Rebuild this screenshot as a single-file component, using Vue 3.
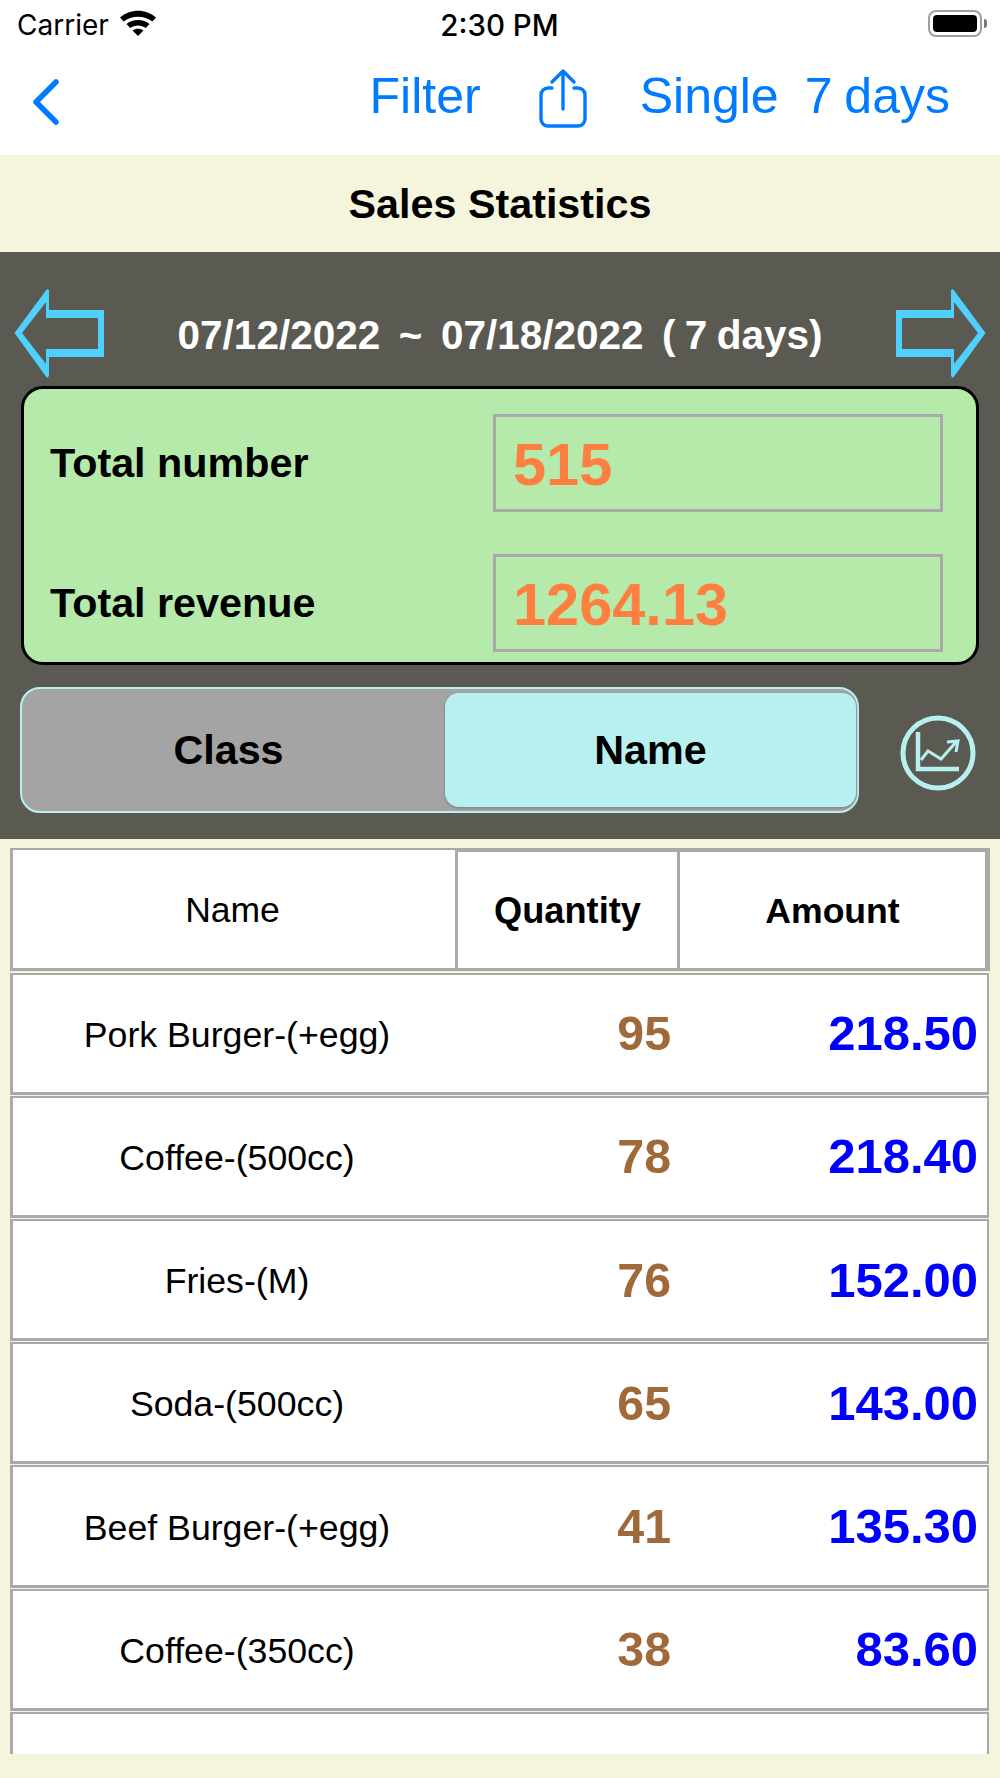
<script setup>
const dateText = '07/12/2022  ~  07/18/2022  ( 7 days)'

const rows = [
  { name: 'Pork Burger-(+egg)', qty: 95, amount: '218.50' },
  { name: 'Coffee-(500cc)', qty: 78, amount: '218.40' },
  { name: 'Fries-(M)', qty: 76, amount: '152.00' },
  { name: 'Soda-(500cc)', qty: 65, amount: '143.00' },
  { name: 'Beef Burger-(+egg)', qty: 41, amount: '135.30' },
  { name: 'Coffee-(350cc)', qty: 38, amount: '83.60' },
  { name: '', qty: '', amount: '' }
]
</script>

<template>
  <div class="page">
    <div class="status-bar">
      <div class="carrier">
        <span>Carrier</span>
        <svg class="wifi" width="38" height="28" viewBox="0 0 38 28">
          <path d="M1 9.5C11 .5 27 .5 37 9.5l-3.6 4C25.500 7 12.500 7 4.600 13.500z" fill="#000" />
          <path d="M7.500 16C13.500 10.500 24.500 10.500 30.500 16l-3.700 4C22.500 16.500 15.500 16.500 11.200 20z" fill="#000" />
          <path d="M13.500 22.500C16.500 20 21.500 20 24.500 22.500L19 28z" fill="#000" />
        </svg>
      </div>
      <div class="clock">2:30 PM</div>
      <div class="battery-wrap">
        <div class="battery"><div class="battery-fill"></div></div>
        <div class="battery-cap"></div>
      </div>
    </div>

    <div class="nav-bar">
      <svg class="back" width="30" height="48" viewBox="0 0 30 48">
        <path d="M26 4L6 24l20 20" fill="none" stroke="#007aff" stroke-width="5.500" stroke-linecap="round" stroke-linejoin="round" />
      </svg>
      <span class="nav-link filter">Filter</span>
      <svg class="share" width="50" height="62" viewBox="0 0 50 62">
        <path d="M14 20H10a7 7 0 0 0-7 7v24a7 7 0 0 0 7 7h30a7 7 0 0 0 7-7V27a7 7 0 0 0-7-7h-4" fill="none" stroke="#007aff" stroke-width="3.400" stroke-linecap="round" />
        <path d="M25 41V3M14 14L25 3l11 11" fill="none" stroke="#007aff" stroke-width="3.400" stroke-linecap="round" stroke-linejoin="round" />
      </svg>
      <span class="nav-link single">Single</span>
      <span class="nav-link days">7 days</span>
    </div>

    <div class="title-bar">Sales Statistics</div>

    <div class="panel">
      <div class="date-row">
        <svg width="90" height="90" viewBox="0 0 90 90">
          <path class="arrow-line" fill-rule="evenodd" d="M.5 45L33 1l2 1v20h55v47H35v19l-2 2zM8 45L32 76V61h52V30H32V14z" />
        </svg>
        <div class="date-text">{{ dateText }}</div>
        <svg class="flip" width="90" height="90" viewBox="0 0 90 90">
          <path class="arrow-line" fill-rule="evenodd" d="M.5 45L33 1l2 1v20h55v47H35v19l-2 2zM8 45L32 76V61h52V30H32V14z" />
        </svg>
      </div>

      <div class="totals">
        <div class="total-row">
          <div class="total-label">Total number</div>
          <div class="total-value">515</div>
        </div>
        <div class="total-row">
          <div class="total-label">Total revenue</div>
          <div class="total-value">1264.13</div>
        </div>
      </div>

      <div class="switch-row">
        <div class="segment">
          <div class="seg-item">Class</div>
          <div class="seg-item active">Name</div>
        </div>
        <svg class="chart" width="80" height="80" viewBox="0 0 80 80">
          <circle cx="40" cy="40" r="35" fill="none" stroke="#b8efef" stroke-width="5" />
          <path d="M20 19V56H61" fill="none" stroke="#b8efef" stroke-width="4.500" />
          <path d="M23 47L30 38L43 46L59 28M49 29L60 28L58 39" fill="none" stroke="#b8efef" stroke-width="3" />
        </svg>
      </div>
    </div>

    <div class="table">
      <div class="table-head">
        <div class="head-cell head-name">Name</div>
        <div class="head-cell head-qty">Quantity</div>
        <div class="head-cell head-amount">Amount</div>
      </div>
      <div v-for="(row, i) in rows" :key="i" class="table-row">
        <div class="row-name">{{ row.name }}</div>
        <div class="row-qty">{{ row.qty }}</div>
        <div class="row-amount">{{ row.amount }}</div>
      </div>
    </div>
  </div>
</template>

<style>
html,
body {
  margin: 0;
  background: #f5f4dc;
}
</style>

<style scoped>
.page {
  width: 1000px;
  height: 1778px;
  overflow: hidden;
  background: #f5f4dc;
  font-family: "Liberation Sans", Arial, sans-serif;
  color: #000;
}

.status-bar {
  display: grid;
  grid-template-columns: 1fr auto 1fr;
  align-items: center;
  height: 50px;
  padding: 0 13px 0 17px;
  background: #fff;
  font-family: Inter, sans-serif;
  font-size: 28px;
}

.carrier {
  display: flex;
  align-items: center;
  gap: 10px;
}

.wifi {
  margin-top: -6px;
}

.clock {
  margin-right: 5px;
  font-size: 29.500px;
  font-weight: 500;
}

.battery-wrap {
  display: flex;
  align-items: center;
  justify-content: flex-end;
  margin-top: -3px;
}

.battery {
  width: 44px;
  height: 17px;
  padding: 3px;
  border: 2px solid #a0a0a0;
  border-radius: 8px;
}

.battery-fill {
  height: 100%;
  background: #000;
  border-radius: 4px;
}

.battery-cap {
  width: 3px;
  height: 9px;
  margin-left: 2px;
  background: #777;
  border-radius: 0 3px 3px 0;
}

.nav-bar {
  display: flex;
  align-items: center;
  height: 105px;
  background: #fff;
  color: #007aff;
}

.back {
  margin-left: 30px;
  margin-top: -2px;
}

.nav-link {
  font-size: 50px;
  margin-top: -14px;
}

.filter {
  margin-left: auto;
}

.share {
  margin-left: 57px;
  margin-top: -7px;
}

.single {
  margin-left: 52px;
}

.days {
  margin-left: 26px;
  margin-right: 50px;
  word-spacing: -2px;
}

.title-bar {
  height: 97px;
  line-height: 99px;
  text-align: center;
  font-size: 41.300px;
  font-weight: 700;
}

.panel {
  height: 587px;
  box-sizing: border-box;
  padding: 36px 21px 0;
  background: #5a5a52;
}

.date-row {
  display: flex;
  align-items: center;
  justify-content: space-between;
  height: 90px;
  margin: 0 -7px;
}

.arrow-line {
  fill: #50d0fc;
}

.flip {
  transform: scaleX(-1);
}

.date-text {
  margin-top: 5px;
  color: #fff;
  font-size: 40.500px;
  font-weight: 700;
  word-spacing: -2px;
  white-space: pre;
}

.totals {
  display: flex;
  flex-direction: column;
  gap: 42px;
  margin-top: 8px;
  height: 279px;
  box-sizing: border-box;
  padding: 25px 33px 0 26px;
  background: #b5eaaa;
  border: 3px solid #000;
  border-radius: 22px;
}

.total-row {
  display: flex;
  align-items: center;
  justify-content: space-between;
}

.total-label {
  font-size: 41.300px;
  font-weight: 700;
}

.total-value {
  box-sizing: border-box;
  width: 450px;
  height: 98px;
  line-height: 96px;
  padding-left: 17px;
  border: 3px solid #a9a9a9;
  color: #ff7f40;
  font-size: 59.500px;
  font-weight: 700;
}

.switch-row {
  display: flex;
  align-items: flex-start;
  margin-top: 22px;
}

.segment {
  display: flex;
  box-sizing: border-box;
  width: 839px;
  height: 126px;
  margin-left: -1px;
  padding: 4px 1px 4px 0;
  background: #a4a4a4;
  border: 2px solid #b8efef;
  border-radius: 20px;
}

.seg-item {
  flex: 1;
  display: flex;
  align-items: center;
  justify-content: center;
  padding-right: 10px;
  border-radius: 14px;
  font-size: 41.300px;
  font-weight: 700;
}

.seg-item.active {
  flex: 0 0 411px;
  padding-right: 0;
  background: #b8efef;
  box-shadow: 0 1px 3px rgba(0, 0, 0, 0.25);
}

.chart {
  margin-left: 39px;
  margin-top: 26px;
}

.table {
  height: 906px;
  margin: 9px 10px 0;
  overflow: hidden;
}

.table-head {
  display: grid;
  grid-template-columns: 442px 219px 305px;
  gap: 3px;
  height: 123px;
  margin-bottom: 1.700px;
  box-sizing: border-box;
  background: #a9a9a9;
  padding: 4px 5px 3px 3px;
}

.head-cell {
  display: flex;
  align-items: center;
  justify-content: center;
  padding-top: 2px;
  background: #fff;
}

.head-name {
  margin-top: -2px;
  padding-right: 3px;
  font-size: 35.500px;
}

.head-qty {
  font-size: 36.200px;
  font-weight: 700;
}

.head-amount {
  font-size: 35.600px;
  font-weight: 700;
}

.table-row {
  display: grid;
  grid-template-columns: 448px 216px 1fr;
  align-items: center;
  height: 122.200px;
  margin: 0 1px 1px 0;
  box-sizing: border-box;
  background: #fff;
  border: 2px solid #a9a9a9;
  border-width: 2px 2px 3px 3px;
}

.row-name {
  margin-top: 4px;
  text-align: center;
  font-size: 35.700px;
}

.row-qty {
  padding-right: 6px;
  text-align: right;
  color: #a0693a;
  font-size: 48.300px;
  font-weight: 700;
}

.row-amount {
  padding-right: 9px;
  text-align: right;
  color: #0000ff;
  font-size: 49px;
  font-weight: 700;
}
</style>
